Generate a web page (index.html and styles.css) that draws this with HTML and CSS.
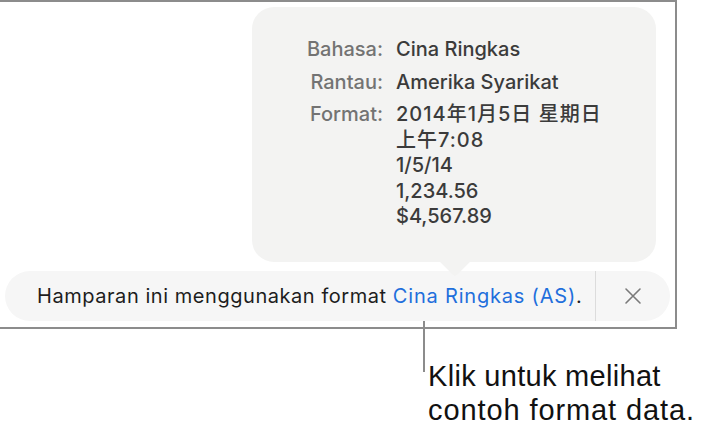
FILE: index.html
```
<!DOCTYPE html>
<html lang="ms">
<head>
    <meta charset="UTF-8">
    <meta name="viewport" content="width=device-width, initial-scale=1.0">
    <title>Format hamparan</title>
    <link rel="stylesheet" href="styles.css">
</head>
<body>
    <div class="frame">
        <div class="popover">
            <div class="info-grid">
                <span class="label">Bahasa:</span>
                <span class="value">Cina Ringkas</span>
                <span class="label">Rantau:</span>
                <span class="value">Amerika Syarikat</span>
                <span class="label">Format:</span>
                <span class="value">
                    <span class="cjk">2014年1月5日 星期日</span><br>
                    <span class="cjk">上午7:08</span><br>
                    1/5/14<br>
                    1,234.56<br>
                    $4,567.89
                </span>
            </div>
            <div class="popover-arrow"></div>
        </div>

        <div class="banner">
            <p class="banner-text">Hamparan ini menggunakan format <a href="#" class="format-link">Cina Ringkas (AS)</a>.</p>
            <div class="banner-close">
                <svg width="18" height="18" viewBox="0 0 18 18">
                    <path d="M2 2 L16 16 M16 2 L2 16" stroke="#7a7a7a" stroke-width="1.6" stroke-linecap="round" fill="none"/>
                </svg>
            </div>
        </div>
    </div>

    <div class="callout">
        <div class="callout-line"></div>
        <p class="callout-text">Klik untuk melihat<br><span class="wide">contoh format data.</span></p>
    </div>
</body>
</html>
```
FILE: styles.css
```
* {
    margin: 0;
    padding: 0;
    box-sizing: border-box;
}

body {
    font-family: Inter, "Noto Sans", sans-serif;
    background: white;
    color: #1f1f1f;
    width: 702px;
    height: 428px;
    overflow: hidden;
}

.frame {
    width: 677px;
    height: 329px;
    border-top: 2px solid #8c8c8c;
    border-right: 2px solid #8c8c8c;
    border-bottom: 2px solid #8c8c8c;
    padding-top: 5px;
}

.popover {
    position: relative;
    z-index: 2;
    margin-left: 252px;
    width: 404px;
    height: 255px;
    background: #f3f3f2;
    border-radius: 22px;
    padding-top: 30px;
}

.popover-arrow {
    position: absolute;
    left: 191px;
    bottom: -10px;
    width: 24px;
    height: 24px;
    background: #f3f3f2;
    transform: rotate(45deg);
    border-radius: 3px;
}

.info-grid {
    display: grid;
    grid-template-columns: 131px auto;
    column-gap: 13px;
    row-gap: 7px;
    font-size: 20px;
    line-height: 25.5px;
}

.label {
    text-align: right;
    color: #737373;
    font-weight: 500;
}

.value {
    color: #3b3b3b;
    font-weight: 500;
}

.cjk {
    font-family: Inter, "Noto Sans CJK SC", sans-serif;
    letter-spacing: 1px;
}

.banner {
    position: relative;
    z-index: 1;
    margin-top: 9px;
    margin-left: 5px;
    width: 665px;
    height: 50px;
    border-radius: 25px;
    background: #f6f6f6;
    display: flex;
    align-items: center;
}

.banner-text {
    flex: 1;
    padding-left: 32px;
    font-size: 20px;
    letter-spacing: 0.55px;
    color: #1d1d1d;
}

.format-link {
    color: #1f6fdc;
    text-decoration: none;
    letter-spacing: 0.8px;
}

.banner-close {
    width: 75px;
    height: 100%;
    border-left: 1px solid #dcdcdc;
    display: flex;
    align-items: center;
    justify-content: center;
}

.callout {
    display: flex;
    margin-left: 423px;
    margin-top: -10px;
}

.callout-line {
    width: 2px;
    height: 53px;
    background: #8c8c8c;
}

.callout-text {
    margin-left: 3px;
    margin-top: 40px;
    font-family: "Liberation Sans", Arial, sans-serif;
    font-size: 29px;
    line-height: 34px;
    letter-spacing: 0.3px;
    color: #111;
}

.callout-text .wide {
    letter-spacing: 0.9px;
}
```
